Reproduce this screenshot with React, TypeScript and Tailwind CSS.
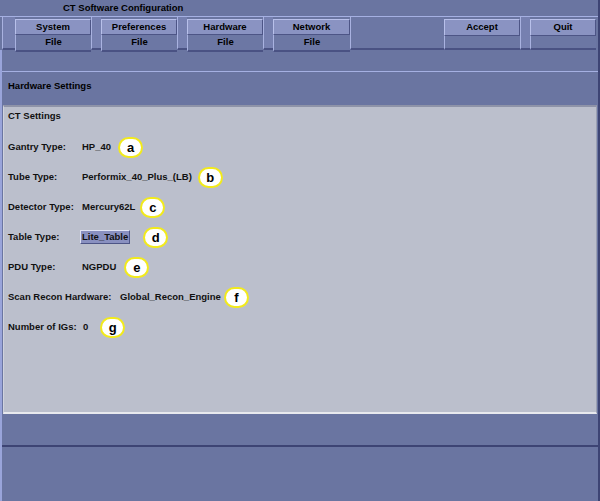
const font = { fontFamily: '"Liberation Sans", Arial, sans-serif' };

function Strip({ w }: { w: string }) {
  return <div className={`${w} h-full bg-[#7680b0] border-l border-[#a9b2e0] border-b-2 border-b-[#4a5283]`} />;
}

function Tool({ label, sub, w }: { label: string; sub?: string; w: string }) {
  return (
    <div className={`${w} h-full flex flex-col`}>
      <div className="h-[17px] mt-[2px] bg-[#8a93c2] border-t border-l border-[#b8c0ea] border-b border-r border-b-[#4d5586] border-r-[#4d5586] flex items-center justify-center text-[9.5px] font-bold text-black">
        {label}
      </div>
      <div className="flex-1 bg-[#6c77a4] border-l border-[#a9b2e0] border-b-2 border-b-[#4a5283] flex items-center justify-center text-[9.5px] font-bold text-black">
        {sub}
      </div>
    </div>
  );
}

function Tag({ ch, ml }: { ch: string; ml: string }) {
  return (
    <div className={`${ml} w-[25px] h-[21px] rounded-full bg-white border-2 border-[#f2ea1c] flex items-center justify-center text-[13px] text-black leading-none`}>
      {ch}
    </div>
  );
}

function Row({ label, lw, children }: { label: string; lw: string; children: React.ReactNode }) {
  return (
    <div className="h-[30px] flex items-center pl-[4px] text-[9.5px] font-bold text-[#111]">
      <div className={lw}>{label}</div>
      {children}
    </div>
  );
}

export default function App() {
  return (
    <div style={font} className="w-[600px] h-[501px] bg-[#6a75a1] overflow-hidden flex flex-col border-r-2 border-[#3d4474]">
      <div className="h-[16px] pl-[63px] flex items-center text-[9.5px] font-bold text-black">CT Software Configuration</div>
      <div className="h-[34px] border-t border-[#a5b0e2] flex">
        <div className="w-[2px]" />
        <Strip w="w-[13px]" />
        <Tool label="System" sub="File" w="w-[76px]" />
        <Strip w="w-[10px]" />
        <Tool label="Preferences" sub="File" w="w-[76px]" />
        <Strip w="w-[10px]" />
        <Tool label="Hardware" sub="File" w="w-[76px]" />
        <Strip w="w-[10px]" />
        <Tool label="Network" sub="File" w="w-[77px]" />
        <div className="w-[94px] h-full bg-[#6c77a4] border-l border-[#a9b2e0] border-b-2 border-b-[#4a5283]" />
        <Tool label="Accept" w="w-[76px]" />
        <Strip w="w-[10px]" />
        <Tool label="Quit" w="w-[66px]" />
      </div>
      <div className="flex-1 flex flex-col border-l-2 border-[#99a4da]">
        <div className="h-[22px] border-b border-[#a5b0e2]" />
        <div className="h-[33px] pl-[6px] pt-[7px] text-[9.5px] font-bold text-black">Hardware Settings</div>
        <div className="h-[309px] ml-[1px] mr-[1px] bg-[#bbbfcc] border-t-2 border-t-[#8e93a8] border-l border-l-[#d0d3dc] border-b-2 border-b-[#e8e9ee] border-r border-r-[#9a9fb2] flex flex-col">
          <div className="h-[25px] pl-[4px] pt-[2px] text-[9.5px] font-bold text-[#111]">CT Settings</div>
          <Row label="Gantry Type:" lw="w-[74px]">
            <span>HP_40</span>
            <Tag ch="a" ml="ml-[7px]" />
          </Row>
          <Row label="Tube Type:" lw="w-[74px]">
            <span>Performix_40_Plus_(LB)</span>
            <Tag ch="b" ml="ml-[6px]" />
          </Row>
          <Row label="Detector Type:" lw="w-[74px]">
            <span>Mercury62L</span>
            <Tag ch="c" ml="ml-[5px]" />
          </Row>
          <Row label="Table Type:" lw="w-[72px]">
            <span className="h-[14px] px-[1px] flex items-center bg-[#8990c0] border-t border-l border-[#dfe2f4] border-b border-r border-b-[#4d5586] border-r-[#4d5586]">Lite_Table</span>
            <Tag ch="d" ml="ml-[13px]" />
          </Row>
          <Row label="PDU Type:" lw="w-[74px]">
            <span>NGPDU</span>
            <Tag ch="e" ml="ml-[8px]" />
          </Row>
          <Row label="Scan Recon Hardware:" lw="w-[112px]">
            <span>Global_Recon_Engine</span>
            <Tag ch="f" ml="ml-[3px]" />
          </Row>
          <Row label="Number of IGs:" lw="w-[75px]">
            <span>0</span>
            <Tag ch="g" ml="ml-[12px]" />
          </Row>
        </div>
        <div className="h-[33px] border-b-2 border-[#3d4474]" />
        <div className="flex-1" />
      </div>
    </div>
  );
}
